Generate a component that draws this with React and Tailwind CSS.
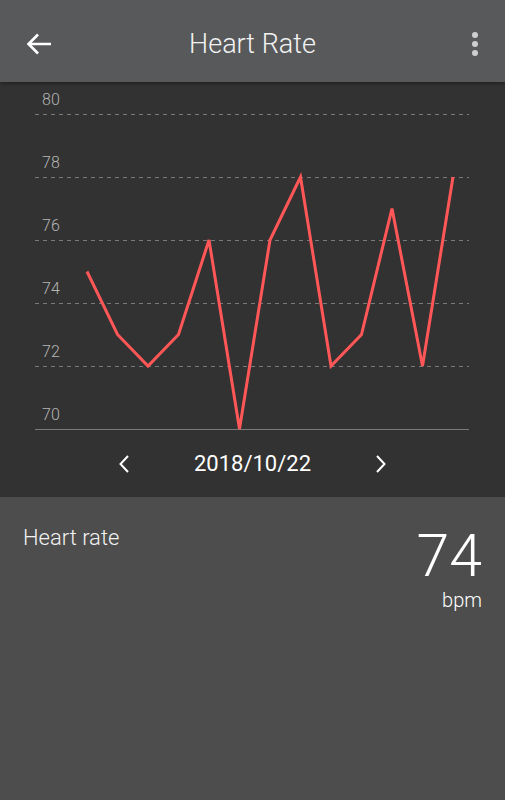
import React from "react";

const values = [75, 73, 72, 73, 76, 70, 76, 78, 72, 73, 77, 72, 78];
const ticks = [80, 78, 76, 74, 72];

const yOf = (v) => 347 - (v - 70) * 31.5;

const HeartChart = () => {
  const points = values
    .map((v, i) => `${87 + i * 30.5},${yOf(v)}`)
    .join(" ");

  return (
    <svg width="505" height="355" className="block">
      {[...ticks, 70].map((t) => (
        <text
          key={`l${t}`}
          x="42"
          y={yOf(t) - 9}
          fill="#b5b5b5"
          fontSize="16"
          fontWeight="300"
          fontFamily="Roboto, sans-serif"
        >
          {t}
        </text>
      ))}
      {ticks.map((t) => (
        <line
          key={t}
          x1="35"
          x2="469"
          y1={yOf(t) + 0.5}
          y2={yOf(t) + 0.5}
          stroke="#7a7a7a"
          strokeWidth="1"
          strokeDasharray="4 4"
        />
      ))}
      <line x1="35" x2="469" y1="347.5" y2="347.5" stroke="#7a7a7a" strokeWidth="1" />
      <polyline
        points={points}
        fill="none"
        stroke="#ff5757"
        strokeWidth="3"
        strokeLinejoin="miter"
      />
    </svg>
  );
};

const App = () => {
  return (
    <div className="w-[505px] h-[800px] flex flex-col bg-[#4d4d4d] font-['Roboto',sans-serif] text-white">
      {/* HEADER */}
      <header className="h-[82px] bg-[#58595b] flex items-center justify-between pl-[26px] pr-[26px] pt-[6px] shadow-[0_2px_3px_rgba(0,0,0,0.3)] relative z-10">
        <svg width="26" height="24" viewBox="0 0 26 24">
          <path
            d="M25 12H3M12 2.5L2.5 12l9.5 9.5"
            fill="none"
            stroke="#fff"
            strokeWidth="2.6"
          />
        </svg>
        <h1 className="text-[27px] font-light text-[#f2f2f2]">Heart Rate</h1>
        <div className="flex flex-col gap-[3px] items-center w-[26px] pl-[18px]">
          <span className="w-[6px] h-[6px] rounded-full bg-[#cfcfcf]" />
          <span className="w-[6px] h-[6px] rounded-full bg-[#cfcfcf]" />
          <span className="w-[6px] h-[6px] rounded-full bg-[#cfcfcf]" />
        </div>
      </header>

      {/* CHART */}
      <section className="bg-[#323232] h-[415px] flex flex-col">
        <HeartChart />
        <div className="flex items-center justify-center gap-[64px] pt-[16px]">
          <svg width="12" height="20" viewBox="0 0 12 20">
            <path d="M10 2L2.5 10l7.5 8" fill="none" stroke="#fff" strokeWidth="2" />
          </svg>
          <span className="text-[22px] text-white leading-none">2018/10/22</span>
          <svg width="12" height="20" viewBox="0 0 12 20">
            <path d="M2 2l7.5 8L2 18" fill="none" stroke="#fff" strokeWidth="2" />
          </svg>
        </div>
      </section>

      {/* SUMMARY */}
      <section className="flex justify-between px-[23px] pt-[24px]">
        <p className="text-[22px] font-light text-[#f2f2f2]">Heart rate</p>
        <div className="flex flex-col items-end">
          <span className="text-[59px] font-light leading-none mt-[5px]">74</span>
          <span className="text-[20px] font-light leading-none mt-[5px]">bpm</span>
        </div>
      </section>
    </div>
  );
};

export default App;
